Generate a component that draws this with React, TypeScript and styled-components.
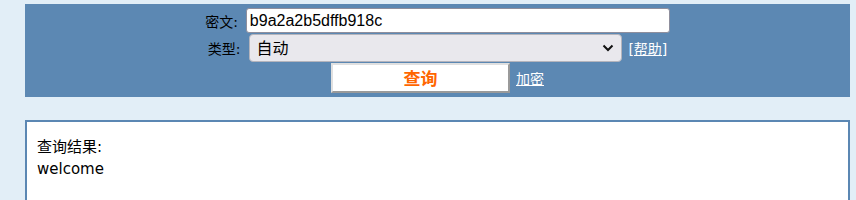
import React from 'react'
import styled, { createGlobalStyle } from 'styled-components'

const GlobalStyle = createGlobalStyle`
  html, body {
    margin: 0;
    padding: 0;
    background: #e2eef7;
    font-family: "DejaVu Sans", "Noto Sans CJK SC", sans-serif;
    color: #000;
  }
`

const Page = styled.div`
  width: 856px;
  height: 200px;
  overflow: hidden;
  padding-top: 4px;
  box-sizing: border-box;
`

const SearchPanel = styled.form`
  margin: 0 6px 0 25px;
  padding: 4px 0;
  background: #5c88b3;
  display: flex;
  flex-direction: column;
  gap: 1px;
`

const FormRow = styled.div<{ $height: number }>`
  display: flex;
  justify-content: center;
  align-items: center;
  height: ${p => p.$height}px;
`

const Label = styled.label`
  font-size: 14px;
  margin-right: 8px;
  white-space: nowrap;
`

const TextInput = styled.input`
  box-sizing: border-box;
  width: 424px;
  height: 25px;
  margin: 0;
  padding: 0 3px;
  border: 1px solid #8f8f9d;
  border-radius: 3px;
  background: #fff;
  font-family: "Liberation Sans", "Noto Sans CJK SC", sans-serif;
  font-size: 16px;
  color: #000;
  outline: none;
`

const SelectWrap = styled.div`
  position: relative;
  width: 373px;
  height: 28px;
  margin-left: 1px;
`

const Select = styled.select`
  appearance: none;
  box-sizing: border-box;
  width: 100%;
  height: 100%;
  margin: 0;
  padding: 0 24px 0 6px;
  border: 1px solid #b4b4bc;
  border-radius: 4px;
  background: #e9e8ed;
  font-family: "Liberation Sans", "Noto Sans CJK SC", sans-serif;
  font-size: 16px;
  color: #000;
  outline: none;
`

const Chevron = styled.svg`
  position: absolute;
  right: 8px;
  top: 10px;
  pointer-events: none;
`

const TextLink = styled.a<{ $gap: number }>`
  margin-left: ${p => p.$gap}px;
  color: #fff;
  font-size: 14px;
  text-decoration: underline;
  white-space: nowrap;
`

const SubmitButton = styled.button`
  box-sizing: border-box;
  width: 179px;
  height: 30px;
  margin: 0;
  padding: 0;
  background: #fff;
  border: 2px solid;
  border-color: #e0e0e0 #9a9a9a #9a9a9a #e0e0e0;
  color: #ff6600;
  font-family: "Noto Sans CJK SC", sans-serif;
  font-weight: bold;
  font-size: 17px;
  line-height: 26px;
`

const ResultBox = styled.div`
  margin: 23px 6px 0 25px;
  height: 120px;
  border: 2px solid #5b87b3;
  border-bottom: none;
  background: #fff;
  padding: 14px 10px;
  font-size: 15px;
`

const ResultTitle = styled.div`
  line-height: 22px;
`

const ResultValue = styled.div`
  line-height: 23px;
`

export default function App() {
  return (
    <Page>
      <GlobalStyle />
      <SearchPanel onSubmit={e => e.preventDefault()}>
        <FormRow $height={25}>
          <Label>密文:</Label>
          <TextInput defaultValue="b9a2a2b5dffb918c" />
        </FormRow>
        <FormRow $height={28}>
          <Label>类型:</Label>
          <SelectWrap>
            <Select defaultValue="auto">
              <option value="auto">自动</option>
            </Select>
            <Chevron width="12" height="8" viewBox="0 0 12 8">
              <path d="M1.5 1.5 L6 6 L10.5 1.5" fill="none" stroke="#111" strokeWidth="2" />
            </Chevron>
          </SelectWrap>
          <TextLink $gap={6} href="#">[帮助]</TextLink>
        </FormRow>
        <FormRow $height={30}>
          <SubmitButton type="submit">查询</SubmitButton>
          <TextLink $gap={6} href="#">加密</TextLink>
        </FormRow>
      </SearchPanel>
      <ResultBox>
        <ResultTitle>查询结果:</ResultTitle>
        <ResultValue>welcome</ResultValue>
      </ResultBox>
    </Page>
  )
}
